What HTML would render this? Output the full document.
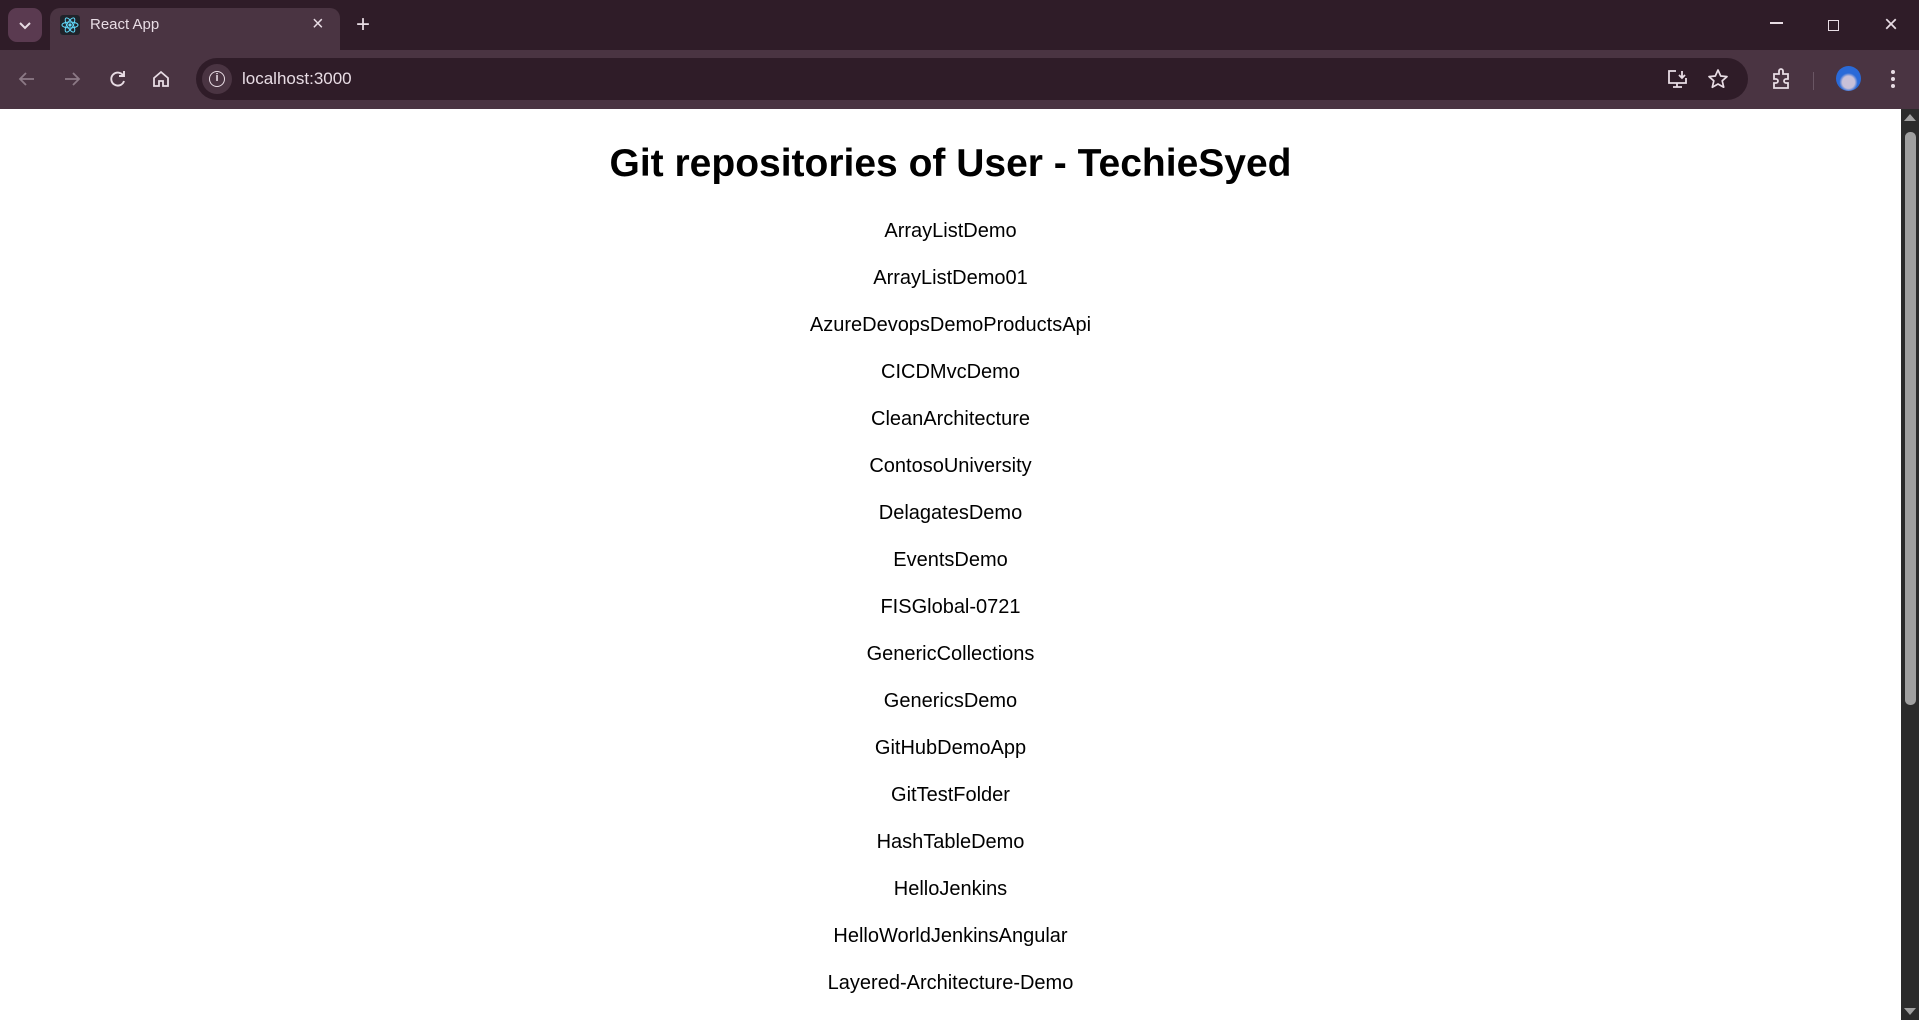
<!DOCTYPE html>
<html><head><meta charset="utf-8"><style>
*{margin:0;padding:0;box-sizing:border-box}
body{width:1919px;height:1020px;overflow:hidden;background:#fff;font-family:"Liberation Sans",sans-serif;position:relative}
.tb{position:absolute;left:0;top:0;width:1919px;height:50px;background:#2f1c28}
.tab{position:absolute;left:50px;top:8px;width:290px;height:42px;background:#4a3442;border-radius:10px 10px 0 0}
.tb2{position:absolute;left:0;top:50px;width:1919px;height:59px;background:#4a3442}
.addr{position:absolute;left:196px;top:58px;width:1552px;height:42px;background:#2f1c28;border-radius:21px}
.c{color:#e8dce4;position:absolute}
.sb{position:absolute;left:1901px;top:109px;width:18px;height:911px;background:#2b2b2b}
.th{position:absolute;left:1905px;top:132px;width:11px;height:573px;background:#a0a0a0;border-radius:5px}
h1{position:absolute;left:0;width:1901px;top:141px;line-height:46px;text-align:center;font-size:39px;font-weight:bold;color:#000}
.list{position:absolute;left:0;width:1901px;top:208px;text-align:center;font-size:20px;color:#000}
.list div{height:47px;line-height:47px}
</style></head><body>
<div class="tb"></div>
<div style="position:absolute;left:8px;top:8px;width:34px;height:34px;background:#5a3a50;border-radius:9px"></div>
<svg style="position:absolute;left:17px;top:18px" width="16" height="14"><path d="M3 5l5 5 5-5" stroke="#e8dce4" stroke-width="2" fill="none"/></svg>
<div class="tab"></div>
<div style="position:absolute;left:60px;top:15px;width:20px;height:20px;background:#20232a;border-radius:3px"></div>
<svg style="position:absolute;left:60px;top:15px" width="20" height="20" viewBox="0 0 20 20"><g stroke="#61dafb" fill="none" stroke-width="1"><ellipse cx="10" cy="10" rx="8" ry="3"/><ellipse cx="10" cy="10" rx="8" ry="3" transform="rotate(60 10 10)"/><ellipse cx="10" cy="10" rx="8" ry="3" transform="rotate(120 10 10)"/></g><circle cx="10" cy="10" r="1.6" fill="#61dafb"/></svg>
<div class="c" style="left:90px;top:16px;font-size:15px">React App</div>
<div class="c" style="left:312px;top:13px;font-size:20px">×</div>
<div class="c" style="left:356px;top:11px;font-size:24px">+</div>
<div class="c" style="left:1770px;top:22px;width:13px;height:1.5px;background:#e8dce4"></div>
<div class="c" style="left:1828px;top:20px;width:11px;height:11px;border:1.5px solid #e8dce4"></div>
<div class="c" style="left:1884px;top:11px;font-size:24px">×</div>
<div class="tb2"></div>
<svg style="position:absolute;left:17px;top:70px" width="20" height="18"><path d="M17 9H3M9 3L3 9l6 6" stroke="#8c7a86" stroke-width="1.8" fill="none"/></svg>
<svg style="position:absolute;left:62px;top:70px" width="20" height="18"><path d="M3 9h14M11 3l6 6-6 6" stroke="#8c7a86" stroke-width="1.8" fill="none"/></svg>
<svg style="position:absolute;left:108px;top:69px" width="20" height="20"><path d="M15.5 7A6.5 6.5 0 1 0 16 12" stroke="#e8dce4" stroke-width="1.9" fill="none"/><path d="M11 7h5V2" stroke="#e8dce4" stroke-width="1.9" fill="none"/></svg>
<svg style="position:absolute;left:152px;top:70px" width="18" height="18"><path d="M2 8l7-6 7 6v8h-5v-5h-4v5H2z" stroke="#e8dce4" stroke-width="1.8" fill="none"/></svg>
<div class="addr"></div>
<div style="position:absolute;left:202px;top:64px;width:30px;height:30px;border-radius:15px;background:#4a3442"></div>
<div style="position:absolute;left:209px;top:71px;width:16px;height:16px;border-radius:8px;border:1.6px solid #e8dce4;color:#e8dce4;font-size:11px;text-align:center;line-height:13px;font-weight:bold">i</div>
<div class="c" style="left:242px;top:69px;font-size:17px">localhost:3000</div>
<svg style="position:absolute;left:1667px;top:69px" width="22" height="20"><path d="M9 2H2v12h17V9M6 18h9M10 14v4M15 2v7M12 6l3 3 3-3" stroke="#e8dce4" stroke-width="1.8" fill="none"/></svg>
<svg style="position:absolute;left:1707px;top:68px" width="22" height="22"><path d="M11 2l2.7 6 6.3.6-4.8 4.2 1.5 6.4L11 16l-5.7 3.2 1.5-6.4L2 8.6 8.3 8z" stroke="#e8dce4" stroke-width="1.7" fill="none" stroke-linejoin="round"/></svg>
<svg style="position:absolute;left:1771px;top:68px" width="22" height="22"><path d="M3 6h5V3a2 2 0 014 0v3h5v5h-2a2 2 0 000 4h2v5H3v-5h2a2 2 0 000-4H3z" stroke="#e8dce4" stroke-width="1.8" fill="none"/></svg>
<div style="position:absolute;left:1813px;top:72px;width:1px;height:18px;background:#6a5664"></div>
<div style="position:absolute;left:1836px;top:66px;width:25px;height:25px;border-radius:13px;background:radial-gradient(circle at 50% 65%,#c8c0d8 0 30%,#2a6ad8 45%)"></div>
<div style="position:absolute;left:1891px;top:70px;width:4px;height:4px;border-radius:2px;background:#e8dce4;box-shadow:0 7px 0 #e8dce4,0 14px 0 #e8dce4"></div>
<div class="sb"></div><div class="th"></div>
<div style="position:absolute;left:1904px;top:114px;width:0;height:0;border-left:6px solid transparent;border-right:6px solid transparent;border-bottom:7px solid #a0a0a0"></div>
<div style="position:absolute;left:1904px;top:1008px;width:0;height:0;border-left:6px solid transparent;border-right:6px solid transparent;border-top:7px solid #a0a0a0"></div>
<h1>Git repositories of User - TechieSyed</h1>
<div class="list">
<div>ArrayListDemo</div><div>ArrayListDemo01</div><div>AzureDevopsDemoProductsApi</div><div>CICDMvcDemo</div><div>CleanArchitecture</div><div>ContosoUniversity</div><div>DelagatesDemo</div><div>EventsDemo</div><div>FISGlobal-0721</div><div>GenericCollections</div><div>GenericsDemo</div><div>GitHubDemoApp</div><div>GitTestFolder</div><div>HashTableDemo</div><div>HelloJenkins</div><div>HelloWorldJenkinsAngular</div><div>Layered-Architecture-Demo</div>
</div>
</body></html>
